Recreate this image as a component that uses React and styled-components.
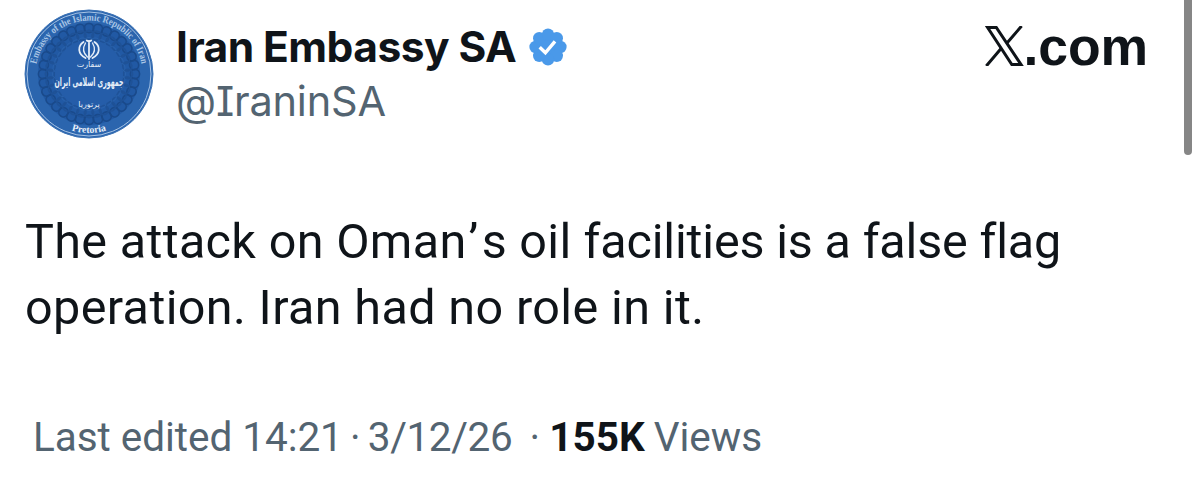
import React from "react"
import styled, { createGlobalStyle } from 'styled-components'


const GlobalStyle = createGlobalStyle`
    body {
        margin: 0;
        background-color: #fff;
        overflow: hidden;
    }
`

const Wrapper = styled.div`
    display: flex;
    justify-content: space-between;
    width: 1200px;
    height: 488px;
    box-sizing: border-box;
    padding-right: 8px;
    background-color: #fff;
    color: #0f1419;
`

const Post = styled.article`
    width: 1124px;
    padding: 9px 0 0 24px;
`

const Header = styled.header`
    display: flex;
    align-items: flex-start;
    height: 130px;
`

const Avatar = styled.svg`
    width: 130px;
    height: 130px;
    flex-shrink: 0;
`

const Names = styled.div`
    margin-left: 22px;
    padding-top: 11px;
    flex: 1;
`

const NameRow = styled.div`
    display: flex;
    align-items: center;
    height: 54px;
`

const Name = styled.span`
    font: 700 42.5px/54px Inter, sans-serif;
    letter-spacing: -0.55px;
    white-space: nowrap;
`

const Badge = styled.svg`
    width: 38px;
    height: 38px;
    margin: -1px 0 0 13px;
`

const Handle = styled.div`
    font: 400 41.5px/54px Inter, sans-serif;
    font-feature-settings: "cv08";
    letter-spacing: -0.2px;
    color: #536471;
`

const Brand = styled.div`
    display: flex;
    align-items: flex-start;
    padding-top: 17px;
`

const Logo = styled.svg`
    width: 40px;
    height: 40px;
`

const Domain = styled.span`
    font: 700 53.5px/58px "Liberation Sans", Arial, sans-serif;
    letter-spacing: -0.1px;
    margin: -8px 0 0 -1px;
`

const Body = styled.p`
    margin: 70px 0 0 1px;
    font: 400 48.5px/66px Roboto, sans-serif;
    white-space: nowrap;
`

const Line = styled.span`
    display: block;
    letter-spacing: ${props => props.$spacing}px;
`

const Phrase = styled.span`
    letter-spacing: ${props => props.$spacing}px;
`

const Apostrophe = styled.span`
    margin: 0 3px 0 2px;
`

const Meta = styled.footer`
    display: flex;
    margin: 68px 0 0 9px;
    font: 400 40.5px/56px Roboto, sans-serif;
    white-space: nowrap;
    color: #536471;
`

const Time = styled.span`
    letter-spacing: -0.05px;
`

const DateText = styled.span`
    letter-spacing: -0.4px;
`

const Dot = styled.span`
    width: ${props => props.$width}px;
    padding-left: ${props => props.$indent || 0}px;
    text-align: center;
`

const Views = styled.span`
    margin-left: 9px;
`

const Count = styled.strong`
    font-weight: 700;
    color: #0f1419;
`

const Scrollbar = styled.div`
    width: 8px;
    height: 155px;
    border-radius: 0 0 4px 4px;
    background-color: #868686;
`

const petals = Array.from({ length: 32 }, (_, i) => i * 360 / 32)
const lobes = Array.from({ length: 8 }, (_, i) => i * Math.PI / 4)

const Seal = () => (
    <Avatar viewBox="0 0 130 130" fontFamily='"Liberation Serif", serif' fill="#e4edf8" textAnchor="middle">
        <defs>
            <path id="top" d="M11.5 65a53.5 53.5 0 0 1 107 0" />
            <path id="bottom" d="M6 65a59 59 0 0 0 118 0" />
        </defs>
        <circle cx="65" cy="65" r="64" fill="#2b65ae" stroke="#3e74b6" />
        <circle cx="65" cy="65" r="62" fill="none" stroke="#a9c5e6" strokeWidth="1" />
        <circle cx="65" cy="65" r="51" fill="#2159a4" />
        <g fill="none" stroke="#1a4a8b" strokeWidth="1.6">
            {petals.map(a => (
                <g key={a} transform={`rotate(${a} 65 65)`}>
                    <circle cx="65" cy="19" r="4.6" />
                    <circle cx="65" cy="26" r="4.6" stroke="#1f5297" />
                    <circle cx="65" cy="33" r="4.6" stroke="#2a62ab" strokeWidth="1" />
                </g>
            ))}
        </g>
        <circle cx="65" cy="65" r="34" fill="#255da9" />
        <text fontSize="10" fontWeight="700" fill="#a9c5e6">
            <textPath href="#top" startOffset="50%" textLength="148" lengthAdjust="spacingAndGlyphs">Embassy of the Islamic Republic of Iran</textPath>
        </text>
        <text fontSize="10" fontWeight="700">
            <textPath href="#bottom" startOffset="50%">Pretoria</textPath>
        </text>
        <g fill="none" stroke="#e4edf8" strokeWidth="1.8" strokeLinecap="round">
            <path d="M65 32v18M62.8 31.5q2.2 1.6 4.4 0" />
            <path d="M59.5 33c-6 4-6 12 2 16M70.5 33c6 4 6 12-2 16" />
            <path d="M61.5 34c-3 5-2.500 10 2 14M68.5 34c3 5 2.500 10-2 14" strokeWidth="1.3" />
        </g>
        <g fontFamily='"DejaVu Sans", sans-serif' direction="rtl">
            <text x="65" y="58" fontSize="8">سفارت</text>
            <text fontSize="10" fontWeight="700" transform="translate(65 77) scale(.62 1.2)">جمهوری اسلامی ایران</text>
            <text x="65" y="98" fontSize="8">پرتوریا</text>
        </g>
    </Avatar>
)

const Verified = () => (
    <Badge viewBox="0 0 38 38">
        <g fill="#4a99e9">
            <circle cx="19" cy="19" r="15" />
            {lobes.map(a => (
                <circle key={a} cx={19 + 12.4 * Math.cos(a)} cy={19 + 12.4 * Math.sin(a)} r="6.2" />
            ))}
        </g>
        <path d="M10.7 19.2l5.7 5.600 9.600-11.500" fill="none" stroke="#fff" strokeWidth="3.4" />
    </Badge>
)

const XLogo = () => (
    <Logo viewBox="0 0 40 40" fill="none" stroke="#0f1419" strokeWidth="3">
        <path d="M2.6 1.5h8.7l24.7 37h-9.200z" />
        <path d="M36.600 0L21.800 17.200M1.300 40l15.200-18" />
    </Logo>
)

const App = () => (
    <>
        <GlobalStyle />
        <Wrapper>
            <Post>
                <Header>
                    <Seal />
                    <Names>
                        <NameRow>
                            <Name>Iran Embassy SA</Name>
                            <Verified />
                        </NameRow>
                        <Handle>@IraninSA</Handle>
                    </Names>
                    <Brand>
                        <XLogo />
                        <Domain>.com</Domain>
                    </Brand>
                </Header>
                <Body>
                    <Line>
                        <Phrase $spacing={0.34}>The attack on Oman<Apostrophe>’</Apostrophe>s oil</Phrase>
                        <Phrase $spacing={-0.16}> facilities is a false flag</Phrase>
                    </Line>
                    <Line $spacing={0.38}>operation. Iran had no role in it.</Line>
                </Body>
                <Meta>
                    <Time>Last edited 14:21</Time>
                    <Dot $width={25}>·</Dot>
                    <DateText>3/12/26</DateText>
                    <Dot $width={29} $indent={8}>·</Dot>
                    <Count>155K</Count>
                    <Views>Views</Views>
                </Meta>
            </Post>
            <Scrollbar />
        </Wrapper>
    </>
)

export default App
